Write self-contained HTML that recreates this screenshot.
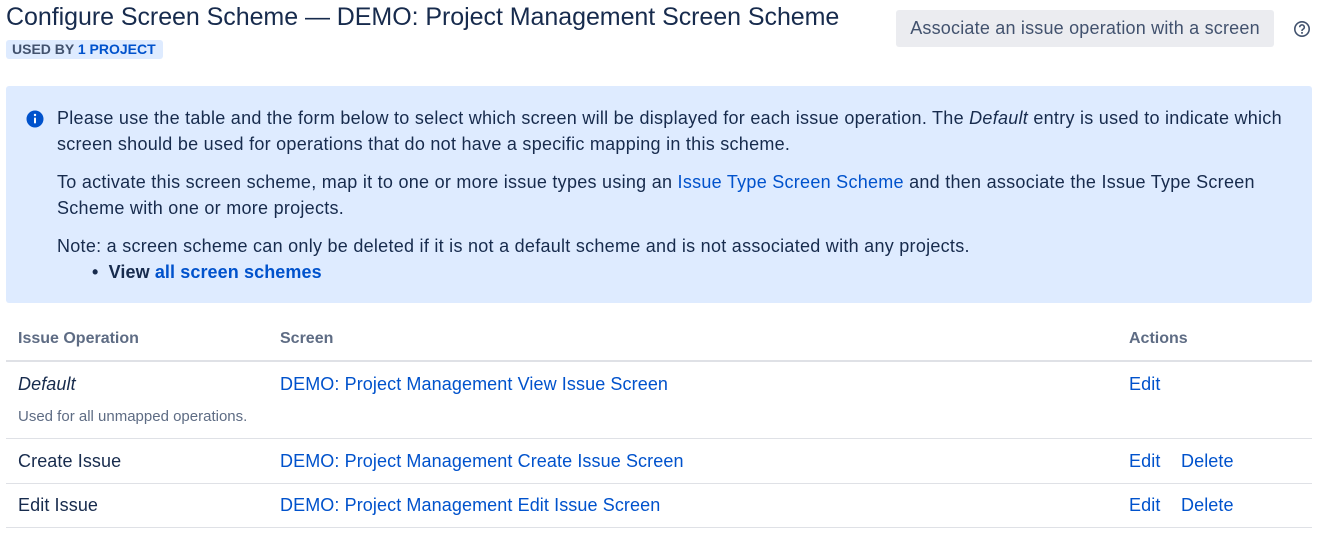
<!DOCTYPE html>
<html><head><style>
body{margin:0;width:1318px;height:534px;background:#fff;font-family:"Liberation Sans",sans-serif;color:#172b4d;position:relative;overflow:hidden}
.a{position:absolute;white-space:nowrap}
a,.l{color:#0052cc;text-decoration:none}
.line{position:absolute;left:6px;width:1306px;height:1px;background:#dfe1e6}
.t{font-size:18px;letter-spacing:0.27px;line-height:26px}
.r{font-size:18px;letter-spacing:0.1px}
</style></head><body>
<div class="a" style="left:6px;top:3px;font-size:25px;letter-spacing:-0.05px;color:#172b4d">Configure Screen Scheme — DEMO: Project Management Screen Scheme</div>
<div class="a" style="left:6px;top:40px;width:157px;height:19px;background:#deebff;border-radius:3px;font-size:14px;font-weight:bold;line-height:19px;text-indent:6px;color:#42526e">USED BY <span class="l">1 PROJECT</span></div>
<div class="a" style="left:896px;top:10px;width:378px;height:37px;background:#ebecf0;border-radius:3px;font-size:18px;letter-spacing:0.2px;line-height:37px;text-align:center;color:#42526e">Associate an issue operation with a screen</div>
<svg class="a" style="left:1293px;top:20px" width="18" height="18" viewBox="0 0 18 18"><circle cx="9" cy="9" r="7.2" fill="none" stroke="#42526e" stroke-width="1.6"/><path d="M6.7 7.2a2.3 2.3 0 1 1 3.2 2.1c-.6.3-.9.7-.9 1.3v.4" fill="none" stroke="#42526e" stroke-width="1.6"/><circle cx="9" cy="12.9" r="1" fill="#42526e"/></svg>
<div class="a" style="left:6px;top:86px;width:1306px;height:217px;background:#deebff;border-radius:3px"></div>
<svg class="a" style="left:26px;top:110px" width="18" height="18" viewBox="0 0 18 18"><circle cx="9" cy="9" r="8.5" fill="#0052cc"/><rect x="8" y="7.5" width="2" height="6" rx="1" fill="#fff"/><circle cx="9" cy="5" r="1.2" fill="#fff"/></svg>
<div class="a t" style="left:57px;top:105px">Please use the table and the form below to select which screen will be displayed for each issue operation. The <i>Default</i> entry is used to indicate which<br>screen should be used for operations that do not have a specific mapping in this scheme.</div>
<div class="a t" style="left:57px;top:169px">To activate this screen scheme, map it to one or more issue types using an <span class="l">Issue Type Screen Scheme</span> and then associate the Issue Type Screen<br>Scheme with one or more projects.</div>
<div class="a t" style="left:57px;top:233px">Note: a screen scheme can only be deleted if it is not a default scheme and is not associated with any projects.</div>
<div class="a t" style="left:92px;top:259px;font-weight:bold;letter-spacing:0.1px">•&nbsp; View <span class="l">all screen schemes</span></div>
<div class="a" style="left:18px;top:330px;font-size:16px;font-weight:bold;color:#5e6c84">Issue Operation</div>
<div class="a" style="left:280px;top:330px;font-size:16px;font-weight:bold;color:#5e6c84">Screen</div>
<div class="a" style="left:1129px;top:330px;font-size:16px;font-weight:bold;color:#5e6c84">Actions</div>
<div class="line" style="top:360px;height:2px"></div>
<div class="a r" style="left:18px;top:374px;font-style:italic">Default</div>
<div class="a" style="left:18px;top:408px;font-size:15px;color:#5e6c84">Used for all unmapped operations.</div>
<div class="a l r" style="left:280px;top:374px">DEMO: Project Management View Issue Screen</div>
<div class="a l r" style="left:1129px;top:374px">Edit</div>
<div class="line" style="top:438px"></div>
<div class="a r" style="left:18px;top:451px">Create Issue</div>
<div class="a l r" style="left:280px;top:451px">DEMO: Project Management Create Issue Screen</div>
<div class="a l r" style="left:1129px;top:451px">Edit</div>
<div class="a l r" style="left:1181px;top:451px">Delete</div>
<div class="line" style="top:483px"></div>
<div class="a r" style="left:18px;top:495px">Edit Issue</div>
<div class="a l r" style="left:280px;top:495px">DEMO: Project Management Edit Issue Screen</div>
<div class="a l r" style="left:1129px;top:495px">Edit</div>
<div class="a l r" style="left:1181px;top:495px">Delete</div>
<div class="line" style="top:527px"></div>
</body></html>
